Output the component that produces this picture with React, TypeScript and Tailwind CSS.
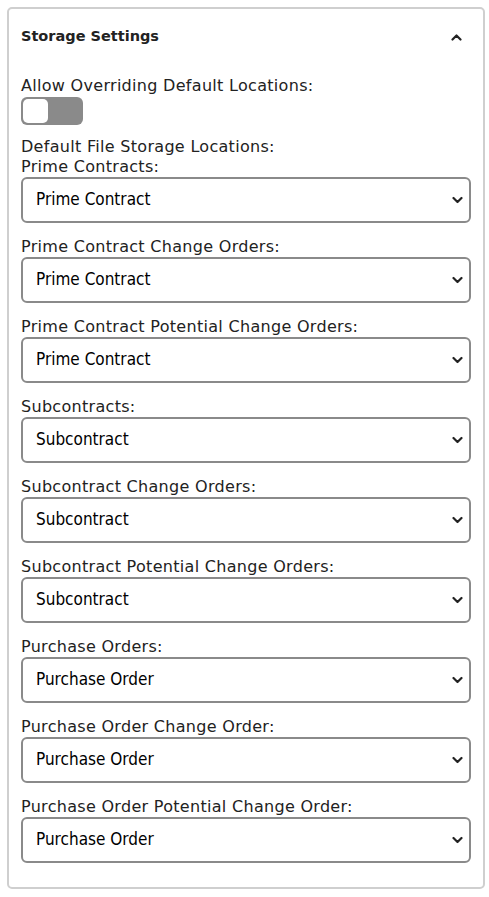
import { useState } from 'react';

const groups = [
    { label: 'Prime Contracts:', value: 'Prime Contract' },
    { label: 'Prime Contract Change Orders:', value: 'Prime Contract' },
    { label: 'Prime Contract Potential Change Orders:', value: 'Prime Contract' },
    { label: 'Subcontracts:', value: 'Subcontract' },
    { label: 'Subcontract Change Orders:', value: 'Subcontract' },
    { label: 'Subcontract Potential Change Orders:', value: 'Subcontract' },
    { label: 'Purchase Orders:', value: 'Purchase Order' },
    { label: 'Purchase Order Change Order:', value: 'Purchase Order' },
    { label: 'Purchase Order Potential Change Order:', value: 'Purchase Order' },
];

const options = ['Prime Contract', 'Subcontract', 'Purchase Order'];

function Chevron({ up }: { up?: boolean }) {
    return (
        <svg width="11" height="7" viewBox="0 0 11 7" className={up ? '' : 'rotate-180'}>
            <path d="M1.5 5.5 L5.5 1.5 L9.5 5.5" fill="none" stroke="#222" strokeWidth="2.2" strokeLinecap="round" strokeLinejoin="round" />
        </svg>
    );
}

function LocationSelect({ label, value }: { label: string; value: string }) {
    return (
        <div className="mb-[14px] last:mb-0">
            <label className="block h-5 leading-5 text-[16px] tracking-[0.3px] text-[#222]">{label}</label>
            <div className="relative">
                <select
                    defaultValue={value}
                    className="h-[46px] w-full appearance-none rounded-[6px] border-2 border-[#8a8a8a] bg-white pl-[13px] pr-8 text-[17px] text-black [font-family:'DejaVu_Sans_Condensed','Liberation_Sans',sans-serif] outline-none"
                >
                    {options.map((o) => (
                        <option key={o}>{o}</option>
                    ))}
                </select>
                <span className="pointer-events-none absolute right-[8px] top-1/2 -translate-y-1/2">
                    <Chevron />
                </span>
            </div>
        </div>
    );
}

export default function App() {
    const [override, setOverride] = useState(false);

    return (
        <div className="min-h-screen bg-white py-[7px] pl-[7px] pr-[4px] [font-family:'DejaVu_Sans',sans-serif]">
            <div className="rounded-[5px] border-2 border-[#cfcfcf] px-[12px] pb-[24px] pt-[16px]">
                <div className="flex h-[24px] items-center justify-between">
                    <h2 className="text-[14.5px] font-semibold text-[#222]">Storage Settings</h2>
                    <button className="mr-[9px]">
                        <Chevron up />
                    </button>
                </div>

                <div className="mt-[27px] h-5 leading-5 text-[16px] tracking-[0.3px] text-[#222]">Allow Overriding Default Locations:</div>
                <button
                    onClick={() => setOverride(!override)}
                    className="mt-[1px] flex h-[28px] w-[62px] items-center rounded-[6px] bg-[#8a8a8a] p-[2px]"
                >
                    <span className="h-[24px] w-[25px] rounded-[5px] bg-white" />
                </button>

                <div className="mt-[12px] h-5 leading-5 text-[16px] tracking-[0.3px] text-[#222]">Default File Storage Locations:</div>
                {groups.map((g) => (
                    <LocationSelect key={g.label} label={g.label} value={g.value} />
                ))}
            </div>
        </div>
    );
}
